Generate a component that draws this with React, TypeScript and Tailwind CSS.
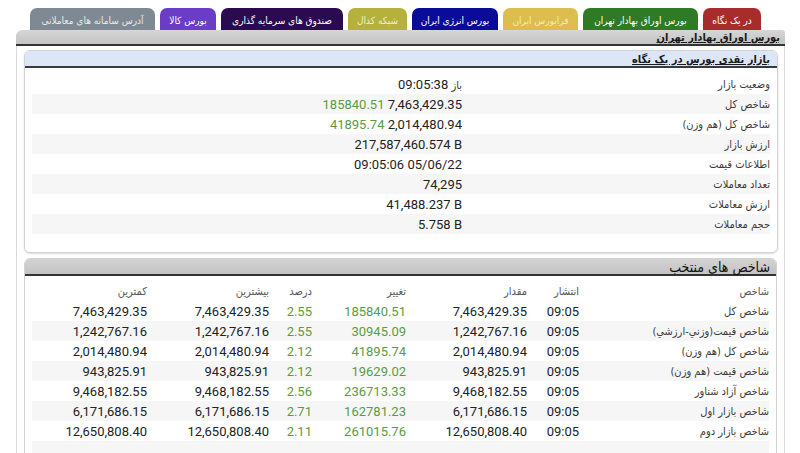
import React from "react";

const tabs = [
  { t: "در یک نگاه", c: "w-[58px] bg-[#a82c2c] text-white" },
  { t: "بورس اوراق بهادار تهران", c: "w-[115px] bg-[#2f7a24] text-white" },
  { t: "فرابورس ایران", c: "w-[75px] bg-[#dcbd4e] text-[#f4eabd]" },
  { t: "بورس انرژی ایران", c: "w-[86px] bg-[#0b0b9a] text-white" },
  { t: "شبکه کدال", c: "w-[59px] bg-[#b4b13c] text-[#f3f0c8]" },
  { t: "صندوق های سرمایه گذاری", c: "w-[122px] bg-[#2a0b50] text-white" },
  { t: "بورس کالا", c: "w-[56px] bg-[#6a3dc6] text-white" },
  { t: "آدرس سامانه های معاملاتی", c: "w-[125px] bg-[#7e8993] text-[#e6e9ec]" },
];

const fa = "font-['DejaVu_Sans_Condensed','DejaVu_Sans',sans-serif]";

const N = ({ children, green }: { children: React.ReactNode; green?: boolean }) => (
  <span
    dir="ltr"
    className={"inline-block font-['Roboto',sans-serif] " + (green ? "text-[#5b9b45]" : "text-[#222]")}
  >
    {children}
  </span>
);

const summary: { l: string; v: React.ReactNode }[] = [
  { l: "وضعیت بازار", v: <><span className={fa + " text-[#333] text-[11px]"}>باز</span> <N>09:05:38</N></> },
  { l: "شاخص کل", v: <><N>7,463,429.35</N> <N green>185840.51</N></> },
  { l: "شاخص کل (هم وزن)", v: <><N>2,014,480.94</N> <N green>41895.74</N></> },
  { l: "ارزش بازار", v: <N>217,587,460.574 B</N> },
  { l: "اطلاعات قیمت", v: <><N>05/06/22</N> <N>09:05:06</N></> },
  { l: "تعداد معاملات", v: <N>74,295</N> },
  { l: "ارزش معاملات", v: <N>41,488.237 B</N> },
  { l: "حجم معاملات", v: <N>5.758 B</N> },
];

const rows = [
  ["شاخص کل", "7,463,429.35", "185840.51", "2.55"],
  ["شاخص قیمت(وزني-ارزشي)", "1,242,767.16", "30945.09", "2.55"],
  ["شاخص کل (هم وزن)", "2,014,480.94", "41895.74", "2.12"],
  ["شاخص قیمت (هم وزن)", "943,825.91", "19629.02", "2.12"],
  ["شاخص آزاد شناور", "9,468,182.55", "236713.33", "2.56"],
  ["شاخص بازار اول", "6,171,686.15", "162781.23", "2.71"],
  ["شاخص بازار دوم", "12,650,808.40", "261015.76", "2.11"],
];

const cols = "grid grid-cols-[190px_52px_121px_94px_43px_122px_116px] items-center h-[20px]";

export default function App() {
  return (
    <div
      dir="rtl"
      className="w-[800px] h-[453px] overflow-hidden bg-white font-['Roboto','DejaVu_Sans',sans-serif] text-[13px] leading-none"
    >
      <div className="flex gap-[5px] pr-[39px] pt-[8px] h-[30px]">
        {tabs.map((t) => (
          <div
            key={t.t}
            className={fa + " h-[22px] rounded-t-[7px] flex justify-center pt-[8px] text-[10px] whitespace-nowrap " + t.c}
          >
            {t.t}
          </div>
        ))}
      </div>
      <div className="ml-[16px] mr-[15px]">
        <div className="h-[16px] bg-gradient-to-b from-[#d6d6d6] to-[#c4c4c4] border-b-2 border-[#333] rounded-tl-[6px] rounded-tr-[3px] pr-[5px] flex items-end">
          <span className={fa + " font-bold text-[11px] text-[#1a1a1a] underline underline-offset-1 pb-[1px]"}>
            بورس اوراق بهادار تهران
          </span>
        </div>
        <div className="border-x border-[#d9d9d9] pl-[7px] pr-[6px] pt-[4px] h-[420px]">
          {/* Panel 1 */}
          <div className="h-[203px] border border-[#d2d2d2] rounded-[6px] shadow-[0_1px_2px_rgba(0,0,0,0.15)] overflow-hidden">
            <div className="h-[17px] bg-[#dde6f6] border-b-2 border-[#3a3a3a] pr-[7px] flex items-end">
              <span className={fa + " font-bold text-[11px] text-[#1a1a1a] underline underline-offset-1 pb-[1px]"}>
                بازار نقدی بورس در یک نگاه
              </span>
            </div>
            <div className="px-[7px] pt-[6px]">
              {summary.map((r, i) => (
                <div
                  key={r.l}
                  className={"grid grid-cols-[305px_1fr] items-center h-[20px] " + (i % 2 === 1 ? "bg-[#f6f6f6]" : "")}
                >
                  <div className={fa + " text-[11px] text-[#3a3a3a]"}>{r.l}</div>
                  <div className="pr-[3px] text-[13px] whitespace-nowrap">{r.v}</div>
                </div>
              ))}
            </div>
          </div>
          {/* Panel 2 */}
          <div className="mt-[5px] mr-[1px] h-[210px] border border-[#d2d2d2] rounded-t-[6px] overflow-hidden">
            <div className="h-[17px] bg-gradient-to-b from-[#d2d2d2] to-[#c4c4c4] border-b-2 border-[#333] pr-[6px] flex items-end">
              <span className={fa + " text-[14px] text-[#111]"}>شاخص های منتخب</span>
            </div>
            <div className="px-[7px] pt-[5px]">
              <div className={cols + " " + fa + " text-[11px] text-[#555]"}>
                <div>شاخص</div>
                <div>انتشار</div>
                <div>مقدار</div>
                <div>تغییر</div>
                <div>درصد</div>
                <div>بیشترین</div>
                <div>کمترین</div>
              </div>
              {rows.map((r, i) => (
                <div key={r[0]} className={cols + (i % 2 === 1 ? " bg-[#f6f6f6]" : "")}>
                  <div className={fa + " text-[11px] text-[#3a3a3a] whitespace-nowrap"}>{r[0]}</div>
                  <div><N>09:05</N></div>
                  <div><N>{r[1]}</N></div>
                  <div><N green>{r[2]}</N></div>
                  <div><N green>{r[3]}</N></div>
                  <div><N>{r[1]}</N></div>
                  <div><N>{r[1]}</N></div>
                </div>
              ))}
              <div className="h-[20px] bg-[#f6f6f6]" />
            </div>
          </div>
        </div>
      </div>
    </div>
  );
}
